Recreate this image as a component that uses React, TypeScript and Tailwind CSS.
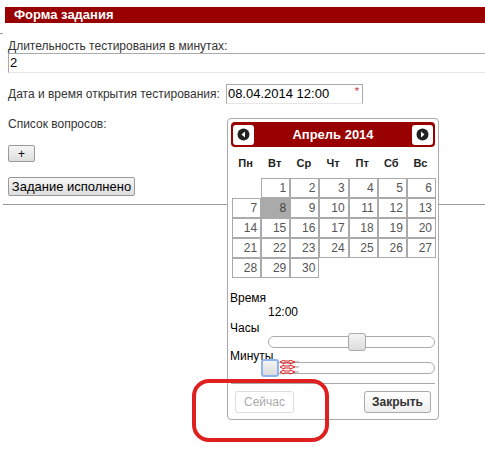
import { Fragment } from 'react';

const days: (number | null)[] = [
  null, 1, 2, 3, 4, 5, 6,
  7, 8, 9, 10, 11, 12, 13,
  14, 15, 16, 17, 18, 19, 20,
  21, 22, 23, 24, 25, 26, 27,
  28, 29, 30, null, null, null, null,
];
const weekdays = ['Пн', 'Вт', 'Ср', 'Чт', 'Пт', 'Сб', 'Вс'];

function NavButton({ dir }: { dir: 'prev' | 'next' }) {
  return (
    <div className="w-[21px] h-[20px] bg-white rounded-[3px] flex items-center justify-center">
      <svg width="13" height="13" viewBox="0 0 13 13">
        <circle cx="6.5" cy="6.5" r="6" fill="#222" />
        {dir === 'prev' ? (
          <path d="M8 3.5 L4.5 6.5 L8 9.5 Z" fill="#fff" />
        ) : (
          <path d="M5 3.5 L8.5 6.5 L5 9.5 Z" fill="#fff" />
        )}
      </svg>
    </div>
  );
}

function Slider({ pos, focused }: { pos: number; focused?: boolean }) {
  return (
    <div className="relative ml-[37px] w-[167px] h-[12px] border border-[#aaa] rounded-[6px] bg-white">
      <div
        className={
          'absolute top-[-4px] w-[18px] h-[18px] rounded-[3px] bg-gradient-to-b from-[#f4f4f4] to-[#dcdcdc] ' +
          (focused ? 'border-2 border-[#8fb3ea]' : 'border border-[#aaa]')
        }
        style={{ left: pos }}
      />
    </div>
  );
}

function Datepicker() {
  return (
    <div className="absolute left-[227px] top-[118px] w-[212px] h-[302px] bg-white border border-[#aaa] rounded-[4px] p-[3px] text-[#222]">
      <div className="h-[25px] bg-[#990000] rounded-[4px] flex items-center justify-between px-[2px]">
        <NavButton dir="prev" />
        <span className="text-white font-bold text-[13px]">Апрель 2014</span>
        <NavButton dir="next" />
      </div>
      <div className="grid grid-cols-7 w-[204px] mt-[4px]">
        {weekdays.map((w) => (
          <div key={w} className="h-[24px] flex items-center justify-center font-bold text-[11px] text-[#222]">
            {w}
          </div>
        ))}
      </div>
      <div className="grid grid-cols-7 w-[204px] mt-[3px] ml-[1px]">
        {days.map((d, i) => (
          <Fragment key={i}>
            {d === null ? (
              <div className="h-[20px]" />
            ) : (
              <div
                className={
                  'h-[20px] border border-[#aaa] text-right pr-[3px] text-[12px] leading-[18px] ' +
                  (d === 8 ? 'bg-[#aaa] text-[#444]' : 'bg-white text-[#555]')
                }
              >
                {d}
              </div>
            )}
          </Fragment>
        ))}
      </div>
      <div className="mt-[13px] text-[12px] leading-[14px] text-black">
        <div className="-ml-[1px]">Время</div>
        <div className="ml-[37px]">12:00</div>
        <div className="-ml-[1px] mt-[2px]">Часы</div>
        <div className="mt-[1px]">
          <Slider pos={79} />
        </div>
        <div className="-ml-[1px] mt-[1px]">Минуты</div>
        <div className="relative mt-[-1px]">
          <Slider pos={-8} focused />
          <svg className="absolute left-[48px] top-[-2px]" width="20" height="16" viewBox="0 0 20 16">
            {[2, 7, 12].map((y) => (
              <g key={y} fill="none" stroke="#e02020" strokeWidth="1">
                <path d={`M1 ${y} L5 ${y - 2} L5 ${y - 1} L11 ${y - 1} L11 ${y - 2} L16 ${y} L11 ${y + 2} L11 ${y + 1} L5 ${y + 1} L5 ${y + 2} Z`} />
                <path d={`M16 ${y} L20 ${y}`} stroke="#999" />
              </g>
            ))}
          </svg>
        </div>
      </div>
      <div className="mt-[9px] border-t border-[#aaa] pt-[7px] flex justify-between px-[4px]">
        <button className="h-[22px] px-[8px] text-[12px] text-[#aaa] border border-[#ddd] rounded-[3px] bg-white">
          Сейчас
        </button>
        <button className="h-[22px] px-[7px] text-[12px] font-bold text-[#333] border border-[#aaa] rounded-[3px] bg-gradient-to-b from-white to-[#eee]">
          Закрыть
        </button>
      </div>
    </div>
  );
}

export default function App() {
  return (
    <div className="relative w-[485px] h-[459px] bg-white overflow-hidden text-[12px] text-[#333] font-['Liberation_Sans',Arial,sans-serif]">
      <div className="pt-[7px] pl-[5px]">
        <div className="h-[16px] bg-[#990000] text-white font-bold text-[13px] leading-[16px] pl-[9px]">
          Форма задания
        </div>
      </div>
      <div className="mt-[10px] w-[3px] border-t border-[#999]" />
      <div className="pl-[8px]">
        <div className="mt-[5px] leading-[14px]">Длительность тестирования в минутах:</div>
        <div className="h-[20px] border border-[#aaa] border-b-[#e6e6e6] border-r-0 text-[13px] text-black leading-[18px] pl-[1px]">
          2
        </div>
        <div className="mt-[11px] flex items-center gap-[6px]">
          <span className="text-[12px]">Дата и время открытия тестирования:</span>
          <div className="relative w-[137px] h-[20px] border border-[#aaa] border-b-[#e6e6e6] text-[13px] text-black leading-[18px] pl-[1px]">
            08.04.2014 12:00
            <span className="absolute right-[3px] top-[-3px] text-[#cc3333] text-[11px]">*</span>
          </div>
        </div>
        <div className="mt-[13px] leading-[14px]">Список вопросов:</div>
        <button className="mt-[14px] w-[27px] h-[17px] border border-[#999] rounded-[2px] bg-gradient-to-b from-[#f6f6f6] to-[#dedede] text-[12px] text-black leading-[14px] flex items-center justify-center">
          +
        </button>
        <button className="mt-[15px] w-[127px] h-[19px] border border-[#999] rounded-[2px] bg-gradient-to-b from-[#f6f6f6] to-[#dedede] text-[13px] text-black leading-[16px]">
          Задание исполнено
        </button>
      </div>
      <div className="mt-[8px] ml-[3px] border-t border-[#999]" />
      <Datepicker />
      <svg className="absolute left-[191px] top-[378px]" width="140" height="65" viewBox="0 0 140 65">
        <rect x="3" y="3" width="133" height="59" rx="15" fill="none" stroke="#e02020" strokeWidth="4" />
      </svg>
    </div>
  );
}
